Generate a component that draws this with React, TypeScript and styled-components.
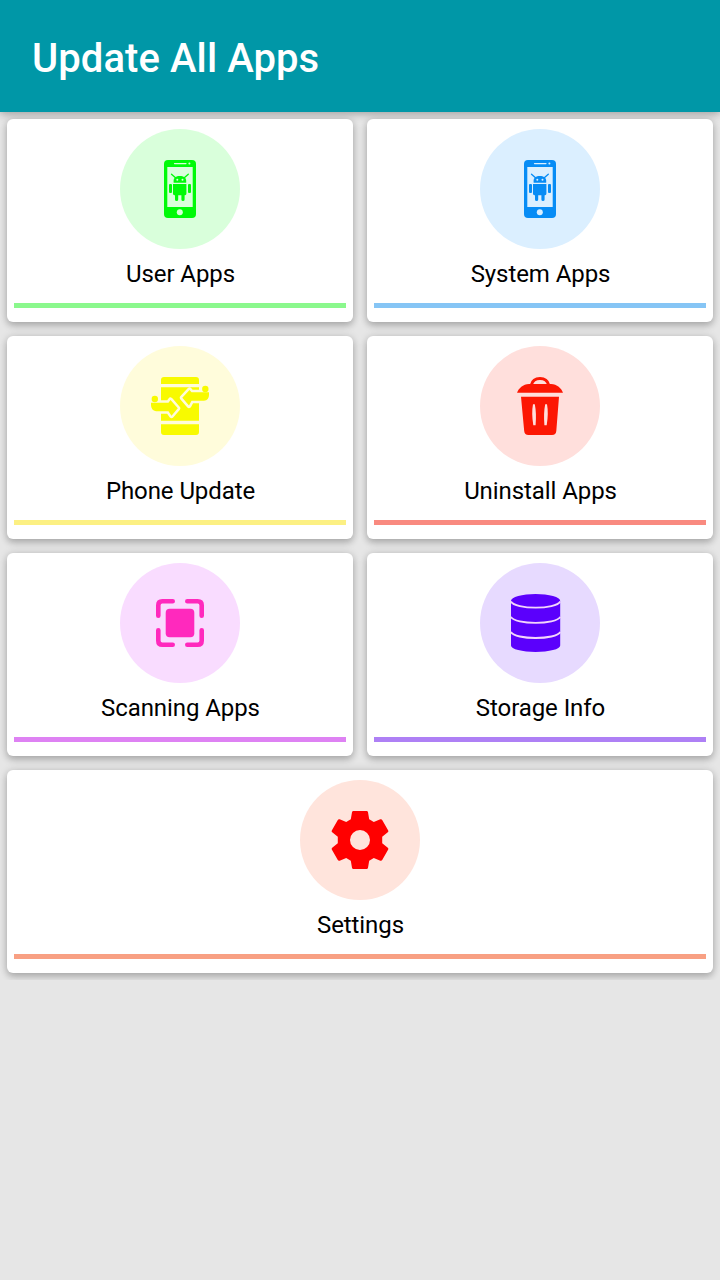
import React from "react";
import styled, { createGlobalStyle } from "styled-components";

const GlobalStyle = createGlobalStyle`
  * { box-sizing: border-box; }
  body { margin: 0; background: #e6e6e6; font-family: Roboto, "Liberation Sans", sans-serif; }
`;

const Screen = styled.div`
  display: flex;
  flex-direction: column;
  min-height: 1280px;
  background: #e6e6e6;
`;

const Toolbar = styled.header`
  display: flex;
  align-items: center;
  height: 112px;
  padding: 5px 32px 0;
  background: #0097a7;
  box-shadow: 0 2px 8px rgba(0, 0, 0, 0.3);
`;

const Title = styled.h1`
  margin: 0;
  color: #fff;
  font-size: 40px;
  line-height: 48px;
  font-weight: 500;
  letter-spacing: 0.08px;
  white-space: nowrap;
`;

const Grid = styled.main`
  display: grid;
  grid-template-columns: 1fr 1fr;
  gap: 14px;
  padding: 7px;
  overflow: hidden;
`;

const Card = styled.section<{ $wide?: boolean }>`
  grid-column: ${(p) => (p.$wide ? "1 / -1" : "auto")};
  display: flex;
  flex-direction: column;
  align-items: center;
  height: 203px;
  padding: 10px 7px 0;
  border-radius: 6px;
  background: #fff;
  box-shadow: 0 4px 7px rgba(0, 0, 0, 0.2), 0 0 8px rgba(0, 0, 0, 0.14);
`;

const Disc = styled.div<{ $color: string }>`
  display: flex;
  align-items: center;
  justify-content: center;
  width: 120px;
  height: 120px;
  border-radius: 50%;
  background: ${(p) => p.$color};
`;

const Icon = styled.svg`
  width: 60px;
  height: 60px;
  display: block;
`;

const Label = styled.div`
  margin-top: 10px;
  padding-left: 1px;
  color: #000;
  font-size: 24px;
  line-height: 30px;
  letter-spacing: -0.08px;
  white-space: nowrap;
`;

const Underline = styled.div<{ $color: string }>`
  align-self: stretch;
  height: 5px;
  margin-top: 14px;
  background: ${(p) => p.$color};
`;

type IconProps = { color: string; bg: string };

const AndroidPhone = ({ color, bg }: IconProps) => (
  <Icon viewBox="0 0 60 60" fill={color}>
    <rect x="14" y="1" width="32" height="58" rx="4" />
    <rect x="17.3" y="8" width="25.4" height="40" fill={bg} />
    <path d="M24.5 4.6H36" stroke={bg} strokeWidth="1.2" strokeLinecap="round" />
    <circle cx="39.4" cy="4.6" r="1" fill={bg} />
    <circle cx="29.8" cy="53.3" r="3" fill={bg} />
    <path d="M21.5 15.2L25.5 18.8M38.3 15.2L34.3 18.8" stroke={color} strokeWidth="1.3" strokeLinecap="round" />
    <path d="M23.6 23.7V22C23.6 18.5 26 17 29.8 17S36.2 18.5 36.2 22V23.7Z" />
    <circle cx="27.3" cy="20.8" r="1" fill={bg} />
    <circle cx="32.5" cy="20.8" r="1" fill={bg} />
    <path d="M23 25H36.4V34.8Q36.4 36.2 35 36.2H34.6V40.5Q34.6 42 33 42T31.4 40.5V36.2H28.2V40.5Q28.2 42 26.6 42T25 40.5V36.2H24.4Q23 36.2 23 34.8Z" />
    <rect x="19" y="25" width="3" height="9" rx="1" />
    <rect x="38" y="25" width="3" height="9" rx="1" />
  </Icon>
);

const PhoneTransfer = ({ color, bg }: IconProps) => (
  <Icon viewBox="0 0 60 60" fill={color}>
    <path d="M11 8V4Q11 1 14 1H46Q49 1 49 4V8ZM11 11.3H49V44.7H11ZM11 48.3H49V56Q49 59 46 59H14Q11 59 11 56Z" />
    <g stroke={bg} strokeWidth="5" strokeLinejoin="round" paintOrder="stroke">
      <path d="M1 26.7H18.5L20.5 24L27.8 32.3L21.5 39.7L18.5 35.3H6Q1 34.3 1 29Z" />
      <path d="M59 16.3H41.5L39.5 14L32.3 21.8L39 29.5L41.5 24.8H54Q59 24 59 19Z" />
    </g>
    <circle cx="4.8" cy="23" r="3.2" />
    <circle cx="55.3" cy="13" r="3.2" />
  </Icon>
);

const Trash = ({ color, bg }: IconProps) => (
  <Icon viewBox="0 0 60 60" fill={color}>
    <path d="M21.3 9C22.5 4.3 25.5 2.5 30 2.5S37.5 4.3 38.7 9" fill="none" stroke={color} strokeWidth="3" />
    <path d="M7 16.8C8.5 12.5 13 8 19 8H41C47 8 51.5 12.5 53 16.8Z" />
    <path d="M11 20.8H49L46.3 55Q46 59 42 59H18.5Q14.5 59 14.2 55Z" />
    <path d="M23 28.2Q21.3 37 23.3 49.3H25.6Q26.6 37 24.8 28.2ZM35.2 28.2Q33.4 37 34.4 49.3H36.7Q38.7 37 37 28.2Z" fill={bg} />
  </Icon>
);

const Scan = ({ color }: IconProps) => (
  <Icon viewBox="0 0 60 60" fill={color}>
    <rect x="15.7" y="15.7" width="28.6" height="28.6" rx="4" />
    <path
      d="M8.3 22.7V12.3Q8.3 8.3 12.3 8.3H22.7M37.3 8.3H47.7Q51.7 8.3 51.7 12.3V22.7M51.7 37.3V47.7Q51.7 51.7 47.7 51.7H37.3M22.7 51.7H12.3Q8.3 51.7 8.3 47.7V37.3"
      fill="none" stroke={color} strokeWidth="4.6" strokeLinecap="round"
    />
  </Icon>
);

const Database = ({ color }: IconProps) => (
  <Icon viewBox="0 0 60 60" fill={color}>
    <path d="M1 8A24.6 7 0 0 1 50.2 8V52.5A24.6 6.5 0 0 1 1 52.5Z" />
    <path d="M1 8.5C5 16.7 46.2 16.7 50.2 8.5M1 23.8C5 31.8 46.2 31.8 50.2 23.8M1 39C5 47 46.2 47 50.2 39" fill="none" stroke="#f3d5fb" strokeWidth="1.8" />
  </Icon>
);

const Gear = ({ color }: IconProps) => (
  <Icon viewBox="0 0 60 60" fill={color}>
    <path
      fillRule="evenodd"
      d="M23.5 1H36.5Q37.8 1 38 2.3L39.2 9.3L43.8 12L50.3 9.3Q51.5 8.8 52.2 9.9L58.2 20.4Q58.8 21.5 57.8 22.3L52.2 26.8V33.2L57.8 37.7Q58.8 38.5 58.2 39.6L52.2 50.1Q51.5 51.2 50.3 50.7L43.8 48L39.2 50.7L38 57.7Q37.8 59 36.5 59H23.5Q22.2 59 22 57.7L20.8 50.7L16.2 48L9.7 50.7Q8.5 51.2 7.8 50.1L1.8 39.6Q1.2 38.5 2.2 37.7L7.8 33.2V26.8L2.2 22.3Q1.2 21.5 1.8 20.4L7.8 9.9Q8.5 8.8 9.7 9.3L16.2 12L20.8 9.3L22 2.3Q22.2 1 23.5 1ZM30 20A10 10 0 1 0 30 40A10 10 0 1 0 30 20Z"
    />
  </Icon>
);

const items = [
  { label: "User Apps", icon: AndroidPhone, color: "#00fa08", bg: "#d9ffdb", line: "#8bf88d" },
  { label: "System Apps", icon: AndroidPhone, color: "#078cf5", bg: "#dbefff", line: "#86c5f5" },
  { label: "Phone Update", icon: PhoneTransfer, color: "#f8fa00", bg: "#fffcdb", line: "#fcf083" },
  { label: "Uninstall Apps", icon: Trash, color: "#fc1703", bg: "#ffdfdc", line: "#f98a80" },
  { label: "Scanning Apps", icon: Scan, color: "#ff29bd", bg: "#f9dcff", line: "#de82f3" },
  { label: "Storage Info", icon: Database, color: "#5b00fc", bg: "#e7daff", line: "#ae80f5" },
  { label: "Settings", icon: Gear, color: "#ff0000", bg: "#ffe4dc", line: "#f8a083", wide: true },
];

export default function App() {
  return (
    <>
      <GlobalStyle />
      <Screen>
        <Toolbar>
          <Title>Update All Apps</Title>
        </Toolbar>
        <Grid>
          {items.map(({ label, icon: Glyph, color, bg, line, wide }) => (
            <Card key={label} $wide={wide}>
              <Disc $color={bg}>
                <Glyph color={color} bg={bg} />
              </Disc>
              <Label>{label}</Label>
              <Underline $color={line} />
            </Card>
          ))}
        </Grid>
      </Screen>
    </>
  );
}
